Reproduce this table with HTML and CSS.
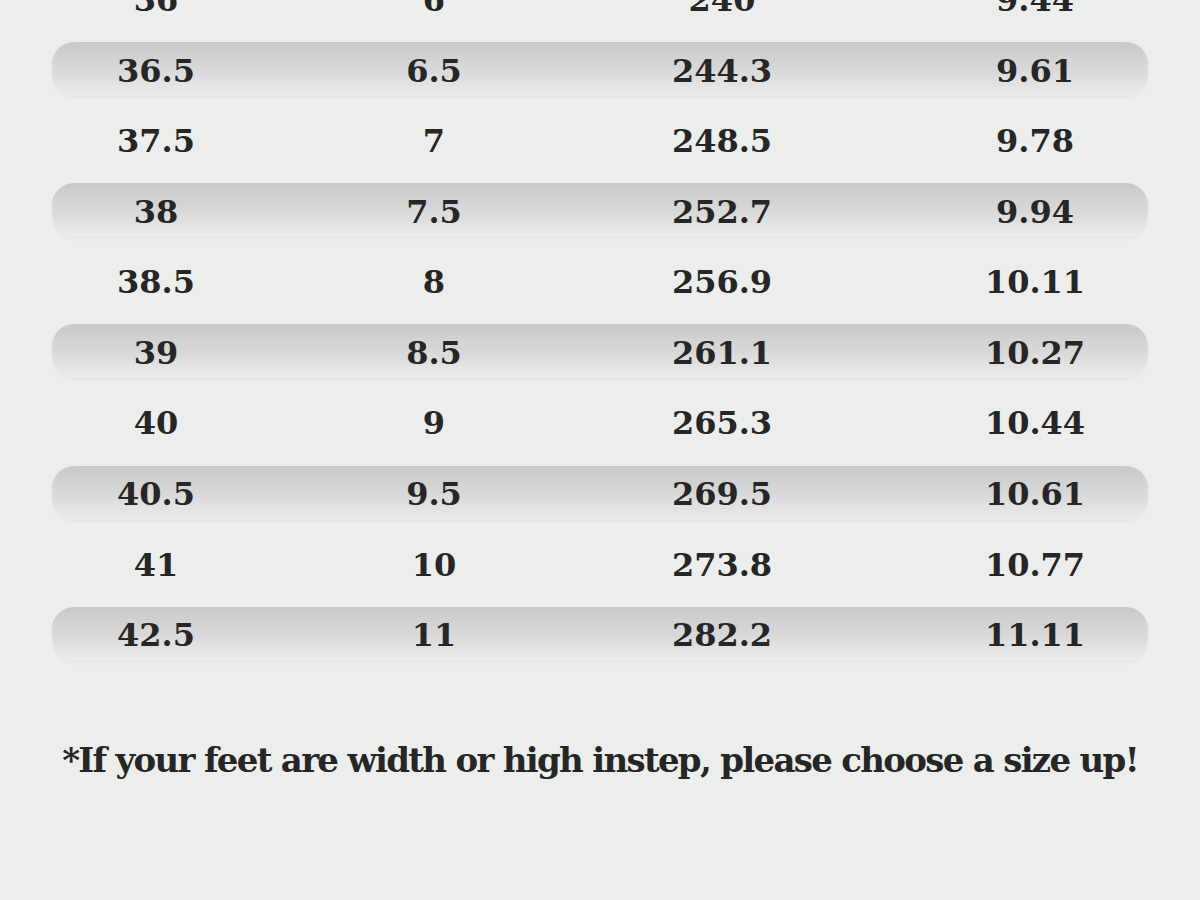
FILE: index.html
```html
<!DOCTYPE html>
<html>
<head>
<meta charset="utf-8">
<link rel="stylesheet" href="styles.css">
</head>
<body>
<div class="chart">
  <div class="row"><span>36</span><span>6</span><span>240</span><span class="last">9.44</span></div>
  <div class="row stripe"><span>36.5</span><span>6.5</span><span>244.3</span><span class="last">9.61</span></div>
  <div class="row"><span>37.5</span><span>7</span><span>248.5</span><span class="last">9.78</span></div>
  <div class="row stripe"><span>38</span><span>7.5</span><span>252.7</span><span class="last">9.94</span></div>
  <div class="row"><span>38.5</span><span>8</span><span>256.9</span><span class="last">10.11</span></div>
  <div class="row stripe"><span>39</span><span>8.5</span><span>261.1</span><span class="last">10.27</span></div>
  <div class="row"><span>40</span><span>9</span><span>265.3</span><span class="last">10.44</span></div>
  <div class="row stripe"><span>40.5</span><span>9.5</span><span>269.5</span><span class="last">10.61</span></div>
  <div class="row"><span>41</span><span>10</span><span>273.8</span><span class="last">10.77</span></div>
  <div class="row stripe"><span>42.5</span><span>11</span><span>282.2</span><span class="last">11.11</span></div>
</div>
<p class="note">*If your feet are width or high instep, please choose a size up!</p>
</body>
</html>
```
FILE: styles.css
```css
html, body {
  margin: 0;
  padding: 0;
  background: #eceeec;
  height: 900px;
  overflow: hidden;
}
body {
  color: #262626;
  font-family: "DejaVu Serif", serif;
}
.chart {
  margin: -28.6px 52px 0 52px;
  display: flex;
  flex-direction: column;
  gap: 16.6px;
}
.row {
  height: 54px;
  box-sizing: border-box;
  padding-top: 3px;
  display: grid;
  grid-template-columns: 208px 348px 228px 312px;
  align-items: center;
  justify-items: center;
  font-weight: bold;
  font-size: 32px;
  border-radius: 22px;
}
.row span {
  display: block;
  text-align: center;
}
.row .last {
  padding-left: 86px;
}
.stripe {
  background: linear-gradient(to bottom, #c9c9c9 0%, #d8d8d8 50%, #ebebeb 100%);
  box-shadow: 0 2px 3px rgba(0, 0, 0, 0.04);
}
.note {
  margin: 79px 0 0 0;
  text-align: center;
  font-family: "DejaVu Serif", serif;
  font-weight: bold;
  font-size: 34px;
  letter-spacing: -1.7px;
}
```
